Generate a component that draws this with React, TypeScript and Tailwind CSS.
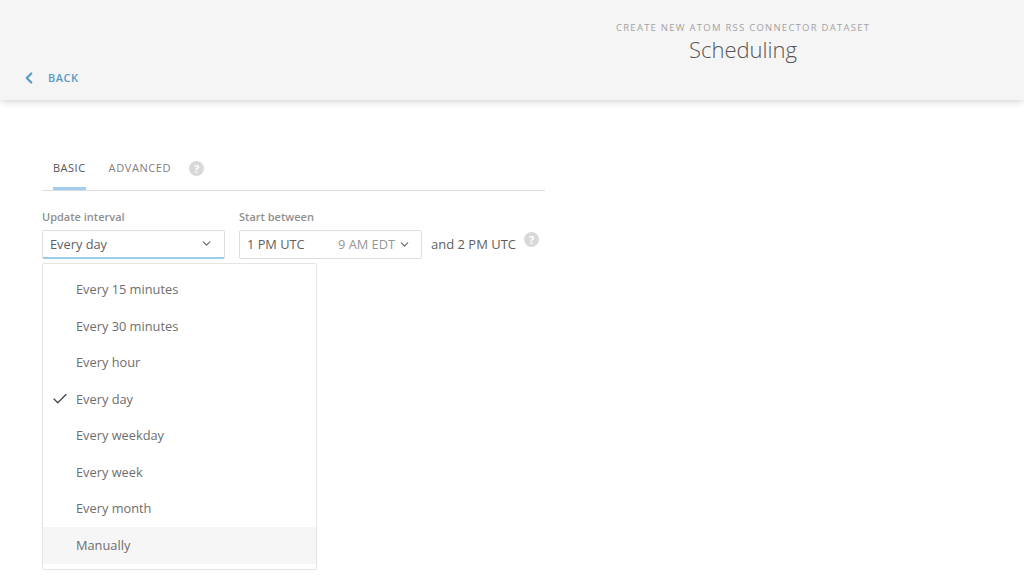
import { ChevronDown, ChevronLeft, Check } from 'lucide-react';

const intervals = [
    'Every 15 minutes',
    'Every 30 minutes',
    'Every hour',
    'Every day',
    'Every weekday',
    'Every week',
    'Every month',
    'Manually',
];

const HelpIcon = () => (
    <span className="flex h-[15px] w-[15px] items-center justify-center rounded-full bg-[#d8d8d8] text-[11px] font-bold leading-none text-white">
        ?
    </span>
);

const App = () => {
    return (
        <div className="h-[579px] overflow-hidden bg-white font-['Open_Sans',sans-serif]">
            {/* Header */}
            <header className="flex h-[100px] items-start justify-between bg-[#f5f5f5] pl-[25px] pr-[154px] shadow-[0_1px_8px_rgba(0,0,0,0.2)]">
                <a className="mt-[69px] flex items-center text-[11px] font-semibold tracking-[0.5px] text-[#5a9ac4]">
                    <ChevronLeft className="-ml-[5px] mr-[10px] h-[18px] w-[18px]" strokeWidth={3} />
                    BACK
                </a>
                <div className="mt-[21px] w-[254px] text-center">
                    <div className="text-[9.5px] leading-[13px] tracking-[1.25px] whitespace-nowrap text-[#a3a3a3]">
                        CREATE NEW ATOM RSS CONNECTOR DATASET
                    </div>
                    <h1 className="mt-[1px] text-[22px] font-light leading-[29px] text-[#555555]">Scheduling</h1>
                </div>
            </header>

            <main className="ml-[42px] mt-[60px] w-[503px]">
                {/* Tabs */}
                <div className="flex h-[31px] items-start border-b border-[#dcdcdc] pl-[11px]">
                    <div className="h-[30px] border-b-[3px] border-[#a2cdee] text-[11px] leading-[15px] tracking-[0.5px] text-[#555555]">
                        BASIC
                    </div>
                    <div className="ml-[23px] text-[11px] leading-[15px] tracking-[0.6px] text-[#808080]">
                        ADVANCED
                    </div>
                    <div className="ml-[18px] pt-[1px]">
                        <HelpIcon />
                    </div>
                </div>

                {/* Form */}
                <div className="relative mt-[19px] flex items-start">
                    <div className="w-[183px]">
                        <label className="block text-[11px] font-semibold leading-[14px] text-[#8f8f8f]">Update interval</label>
                        <div className="mt-[6px] flex h-[29px] items-center justify-between rounded-[2px] border border-[#dedede] border-b-2 border-b-[#9ccbec] pl-[7px] pr-[11px] pt-[1px] text-[12.8px] text-[#5f5f5f]">
                            Every day
                            <ChevronDown className="h-[13px] w-[13px] -translate-y-[1px] text-[#666666]" />
                        </div>
                    </div>
                    <div className="ml-[14px] w-[183px]">
                        <label className="block text-[11px] font-semibold leading-[14px] text-[#8f8f8f]">Start between</label>
                        <div className="mt-[6px] flex h-[29px] items-center rounded-[2px] border border-[#dedede] pl-[7px] pr-[10px] pt-[1px] text-[12.8px] text-[#5f5f5f]">
                            1 PM UTC
                            <span className="ml-auto text-[#969696]">9 AM EDT</span>
                            <ChevronDown className="ml-[3px] h-[13px] w-[13px] -translate-y-[1px] text-[#666666]" />
                        </div>
                    </div>
                    <div className="ml-[9px] mt-[22px] flex items-start">
                        <span className="mt-[2px] text-[13px] font-medium leading-[20px] text-[#5f5f5f]">and 2 PM UTC</span>
                        <span className="ml-[8px]">
                            <HelpIcon />
                        </span>
                    </div>

                    {/* Dropdown menu */}
                    <div className="absolute left-0 top-[53px] h-[307px] w-[275px] rounded-[2px] border border-[#e4e4e4] bg-white pt-[7.5px]">
                        {intervals.map((item) => (
                            <div
                                key={item}
                                className={`relative flex h-[36.5px] items-center pl-[33px] text-[12.8px] text-[#6e6e6e] ${item === 'Manually' ? 'bg-[#f6f6f6]' : ''}`}
                            >
                                {item === 'Every day' && (
                                    <Check className="absolute left-[8px] top-[9px] h-[18px] w-[18px] text-[#444444]" strokeWidth={1.75} />
                                )}
                                {item}
                            </div>
                        ))}
                    </div>
                </div>
            </main>
        </div>
    );
};

export default App;
